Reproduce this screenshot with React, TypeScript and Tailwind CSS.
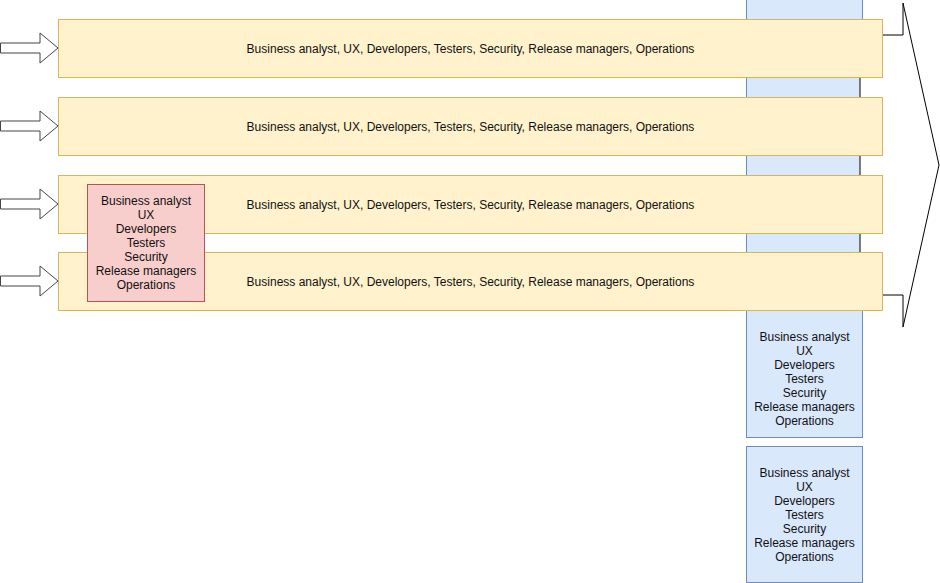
import React from "react";

const roles = ["Business analyst", "UX", "Developers", "Testers", "Security", "Release managers", "Operations"];
const line = "Business analyst, UX, Developers, Testers, Security, Release managers, Operations";

function RoleList() {
  return (
    <div className="flex flex-col items-center text-[12px] leading-[14px] text-[#111]">
      {roles.map((r) => (
        <span key={r}>{r}</span>
      ))}
    </div>
  );
}

export default function App() {
  const bars = [19, 97, 175, 252];
  return (
    <div className="relative w-[940px] h-[583px] bg-white overflow-hidden" style={{ fontFamily: '"Liberation Sans", Arial, sans-serif' }}>
      {/* blue columns */}
      <div className="absolute left-[746px] top-[-1px] w-[117px] h-[439px] bg-[#dae8fc] border border-[#6c8ebf] flex items-end justify-center pb-[9px]">
        <RoleList />
      </div>
      <div className="absolute left-[746px] top-[446px] w-[117px] h-[137px] bg-[#dae8fc] border border-[#6c8ebf] flex items-center justify-center">
        <RoleList />
      </div>
      {/* big arrow */}
      <svg className="absolute left-0 top-0" width="940" height="583">
        <polygon points="860,35 903,35 903,3 939,165 903,327 903,295 860,295" fill="white" stroke="#000" strokeWidth="1" />
        {bars.map((y) => (
          <polygon key={y} points={`0.5,${y + 24} 40,${y + 24} 40,${y + 14} 58,${y + 29} 40,${y + 44} 40,${y + 34} 0.5,${y + 34}`} fill="white" stroke="#444" strokeWidth="1" />
        ))}
      </svg>
      {bars.map((y) => (
        <div key={y} className="absolute left-[58px] w-[825px] h-[59px] bg-[#fff2cc] border border-[#d6b656] flex items-center justify-center text-[12px] text-[#111]" style={{ top: y }}>
          {line}
        </div>
      ))}
      <div className="absolute left-[87px] top-[184px] w-[118px] h-[118px] bg-[#f8cecc] border border-[#b85450] flex items-center justify-center">
        <RoleList />
      </div>
    </div>
  );
}
